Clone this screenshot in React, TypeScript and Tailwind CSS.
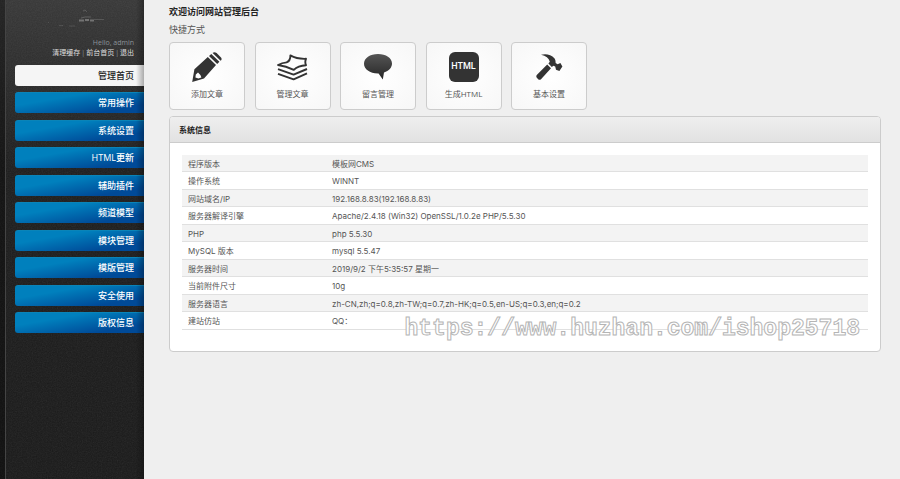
import React, { useState } from "react";

interface Shortcut {
  label: string;
  icon: React.ReactNode;
}

const PencilIcon = () => (
  <svg width="30" height="30" viewBox="0 0 30 30" fill="#333" aria-hidden="true">
    <path
      fillRule="evenodd"
      d="M0.2 30 L2.4 17.2 L15.8 5 L24 13 L12 26.4 Z M3.8 22.4 L6 20.4 L8.4 23 L9.4 25.4 L6.4 26.6 L3.4 25.6 Z"
    />
    <path d="M17 3.9 L19.3 1.9 L27.4 9.7 L25.2 12 Z" />
    <path d="M20.6 1 Q22.4 -0.4 24.6 1 L29 5.4 Q30.4 7.2 28.6 8.8 Z" />
  </svg>
);

const PapersIcon = () => (
  <svg
    width="31"
    height="27"
    viewBox="0 0 31 27"
    fill="none"
    stroke="#333"
    strokeWidth="1.9"
    strokeLinejoin="round"
    aria-hidden="true"
  >
    <path d="M13.4 1.4 Q20 5.2 29 4.8 Q27.6 8 29 11.2 Q21 11.6 16.8 15.8 Q9 12 1 11 Q5 8.8 9.6 8.4 Q13.6 6.6 13.4 1.4 Z" />
    <path d="M1 15.2 L16.6 20.6 L30 15" />
    <path d="M1 19.8 L16.6 25.4 L30 19.4" />
  </svg>
);

const BubbleIcon = () => (
  <svg width="28" height="26" viewBox="0 0 28 26" aria-hidden="true">
    <defs>
      <linearGradient id="bubble" x1="0" y1="0" x2="0" y2="1">
        <stop offset="0" stopColor="#555" />
        <stop offset="1" stopColor="#262626" />
      </linearGradient>
    </defs>
    <path
      fill="url(#bubble)"
      d="M14 0 C22 0 28 4 28 9.6 C28 13.6 25 17 20 18.5 L18.8 25.5 L14.6 19.4 C6 19.6 0 15.4 0 9.8 C0 4 6 0 14 0 Z"
    />
  </svg>
);

const HtmlIcon = () => (
  <span className="flex size-[30px] items-center justify-center rounded-md bg-[#333] font-['Roboto',sans-serif] text-[9px] font-medium text-white">
    HTML
  </span>
);

const HammerIcon = () => (
  <svg width="27" height="27" viewBox="0 0 27 27" fill="#333" aria-hidden="true">
    <path d="M5 0.8 C9 -0.4 15 0 18.6 4.6 Q19.8 6.6 19.6 9 L21.6 10.2 L24.4 9 L26.4 12.4 L23.4 17 L20 15.8 L19.2 12.6 L17.4 11.8 L15.8 13 L12.4 9.6 L13.8 7.8 Q12.4 2.4 5 0.8 Z" />
    <path d="M11.2 10.4 L15 14.2 L5 25.2 Q3.6 26.4 2.2 25.2 L0.6 23.4 Q-0.2 22 1 20.8 Z" />
  </svg>
);

const shortcuts: Shortcut[] = [
  { label: "添加文章", icon: <PencilIcon /> },
  { label: "管理文章", icon: <PapersIcon /> },
  { label: "留言管理", icon: <BubbleIcon /> },
  { label: "生成HTML", icon: <HtmlIcon /> },
  { label: "基本设置", icon: <HammerIcon /> },
];

const menu = [
  "管理首页",
  "常用操作",
  "系统设置",
  "HTML更新",
  "辅助插件",
  "频道模型",
  "模块管理",
  "模版管理",
  "安全使用",
  "版权信息",
];

const info = [
  ["程序版本", "模板网CMS"],
  ["操作系统", "WINNT"],
  ["网站域名/IP", "192.168.8.83(192.168.8.83)"],
  ["服务器解译引擎", "Apache/2.4.18 (Win32) OpenSSL/1.0.2e PHP/5.5.30"],
  ["PHP", "php 5.5.30"],
  ["MySQL 版本", "mysql 5.5.47"],
  ["服务器时间", "2019/9/2 下午5:35:57 星期一"],
  ["当前附件尺寸", "10g"],
  ["服务器语言", "zh-CN,zh;q=0.8,zh-TW;q=0.7,zh-HK;q=0.5,en-US;q=0.3,en;q=0.2"],
  ["建站仿站", "QQ："],
];

const Sidebar: React.FC = () => {
  const [active, setActive] = useState("管理首页");

  return (
    <aside className="relative w-36 shrink-0 bg-linear-to-b from-[#373737] via-[#1d1d1d] via-35% to-[#191919] pl-[5px]">
      {/* grain of the dark background */}
      <svg className="absolute inset-0 h-full w-full opacity-10" aria-hidden="true">
        <filter id="grain">
          <feTurbulence type="fractalNoise" baseFrequency="0.8" numOctaves="2" />
          <feColorMatrix type="saturate" values="0" />
        </filter>
        <rect width="100%" height="100%" filter="url(#grain)" />
      </svg>
      <div className="absolute inset-y-0 left-0 w-[5px] bg-black/35" />
      <div className="relative flex min-h-full flex-col border-l border-[#444] pl-[9px]">
        <svg className="mt-2 ml-8 h-5 w-16" viewBox="0 0 64 20" fill="none" stroke="#999" aria-hidden="true">
          <path d="M36 3 l2 -1 l2 2" opacity="0.35" />
          <path d="M32 12.5 h5 M38 12 h4 M43 12.5 h4" strokeWidth="2" opacity="0.6" />
          <path d="M47 11.5 h10" opacity="0.3" />
          <path d="M34 10 l4 -1 h6" opacity="0.4" />
          <path d="M12 17.5 h4 M22 18 h6 M1 14 l1 1" opacity="0.25" />
        </svg>
        <div className="mt-[10px] pr-[10px] text-right text-[7px] leading-[10px] text-[#8b9298]">
          <p>Hello, admin</p>
          <p>
            <a href="#cache" className="text-[#ddd]">清理缓存</a>
            <span className="px-px">|</span>
            <a href="#front" className="text-[#ddd]">前台首页</a>
            <span className="px-px">|</span>
            <a href="#logout" className="text-[#ddd]">退出</a>
          </p>
        </div>
        <nav className="mt-[7px]">
          <ul className="flex h-[268px] flex-col justify-between">
            {menu.map((item) => (
              <li key={item}>
                <a
                  href="#menu"
                  onClick={() => setActive(item)}
                  className={
                    item === active
                      ? "block h-[21px] rounded-l-[3px] bg-[#f5f5f5] pr-[10px] text-right text-[9px] leading-[21px] font-medium text-[#222]"
                      : "block h-[21px] rounded-l-[3px] border-t border-[#0a84b8] bg-linear-170 from-[#0080bd] from-30% to-[#004a98] to-80% pr-[10px] text-right text-[9px] leading-5 font-medium text-white"
                  }
                >
                  {item}
                </a>
              </li>
            ))}
          </ul>
        </nav>
      </div>
      <div className="pointer-events-none absolute inset-y-0 right-0 w-2 bg-linear-to-r from-transparent to-black/30" />
    </aside>
  );
};

const App: React.FC = () => {
  return (
    <div className="flex min-h-screen bg-[#efefef] font-['Open_Sans','Noto_Sans_CJK_SC',sans-serif] text-[#555]">
      <Sidebar />
      <main className="min-w-0 flex-1 pt-[5px] pr-[19px] pl-[25px]">
        <h1 className="text-[9px] leading-[14px] font-bold text-[#222]">欢迎访问网站管理后台</h1>
        <p className="mt-1 text-[9px] leading-[14px]">快捷方式</p>

        <ul className="mt-[5px] flex w-[418px] justify-between">
          {shortcuts.map((s) => (
            <li key={s.label}>
              <a
                href="#shortcut"
                className="flex h-[68px] w-[76px] flex-col items-center rounded-[4px] border border-[#ccc] bg-radial from-white to-[#f7f7f7] pt-[9px] text-[8px]"
              >
                <span className="flex h-[30px] items-center">{s.icon}</span>
                <span className="mt-[6px] leading-3">{s.label}</span>
              </a>
            </li>
          ))}
        </ul>

        <section className="relative mt-[6px] rounded-[4px] border border-[#ccc] bg-white">
          <h2 className="rounded-t-[3px] border-b border-[#ccc] bg-linear-to-b from-[#eee] to-[#e2e2e2] px-[9px] text-[8px] leading-[25px] font-bold text-[#222]">
            系统信息
          </h2>
          <div className="px-3 pt-3 pb-[21px]">
            <table className="h-[175px] w-full text-left font-['Inter','Noto_Sans_CJK_SC',sans-serif] text-[8px] leading-[14px]">
              <tbody>
                {info.map(([name, value]) => (
                  <tr key={name} className="border-b border-[#e0e0e0] odd:bg-[#f3f3f3]">
                    <th scope="row" className="w-[150px] pt-px pb-0 pl-[6px] font-normal">
                      {name}
                    </th>
                    <td className="pt-px pb-0">{value}</td>
                  </tr>
                ))}
              </tbody>
            </table>
          </div>
          <p className="pointer-events-none absolute right-[20px] bottom-[7px] font-['Liberation_Mono',monospace] text-[23px] leading-[30px] font-bold whitespace-nowrap text-white [-webkit-text-stroke:1px_#b5b5b5]">
            https://www.huzhan.com/ishop25718
          </p>
        </section>
      </main>
    </div>
  );
};

export default App;
